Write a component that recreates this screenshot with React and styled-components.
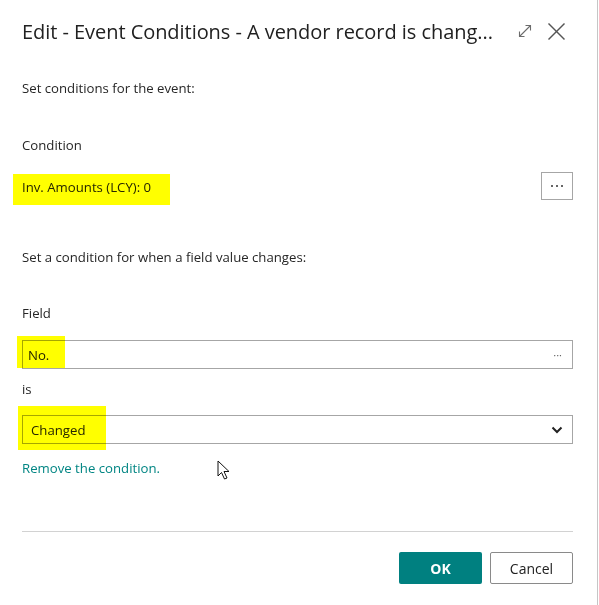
import React from 'react';
import styled, { createGlobalStyle } from 'styled-components';

const GlobalStyle = createGlobalStyle`
    body {
        margin: 0;
        background: #ffffff;
        font-family: "Open Sans", "Noto Sans", sans-serif;
        color: #212121;
    }
`;

const App = () => {
    return (
        <>
            <GlobalStyle />
            <Dialog>
                <Header>
                    <Title>Edit - Event Conditions - A vendor record is chang...</Title>
                    <HeaderIcons>
                        <IconButton aria-label="Expand">
                            <svg width="16" height="16" viewBox="0 0 16 16" fill="none" stroke="#6b6b6b" strokeWidth="1.1">
                                <path d="M2.5 13.5 L13.5 2.5" />
                                <path d="M8.5 2.5 H13.5 V7.5" />
                                <path d="M2.5 8.5 V13.5 H7.5" />
                            </svg>
                        </IconButton>
                        <IconButton aria-label="Close">
                            <svg width="19" height="19" viewBox="0 0 19 19" fill="none" stroke="#555" strokeWidth="1.5">
                                <path d="M1.5 1.5 L17.5 17.5" />
                                <path d="M17.5 1.5 L1.5 17.5" />
                            </svg>
                        </IconButton>
                    </HeaderIcons>
                </Header>

                <Body>
                    <Text $top={16}>Set conditions for the event:</Text>
                    <Text $top={37}>Condition</Text>
                    <ConditionRow>
                        <Marked>
                            Inv. Amounts (LCY): 0
                            <Highlight style={{ left: -9, top: -3, width: 157, height: 31 }} />
                        </Marked>
                        <DotsButton>
                            <Dots />
                        </DotsButton>
                    </ConditionRow>

                    <Text $top={47}>Set a condition for when a field value changes:</Text>
                    <Text $top={36}>Field</Text>
                    <Field $top={17}>
                        <FieldValue>No.</FieldValue>
                        <SmallDots>···</SmallDots>
                        <Highlight style={{ left: -6, top: -5, width: 48, height: 32 }} />
                    </Field>
                    <Text $top={10}>is</Text>
                    <Field $top={16}>
                        <FieldValue $pad={8}>Changed</FieldValue>
                        <svg width="12" height="8" viewBox="0 0 12 8" fill="none" stroke="#222" strokeWidth="2">
                            <path d="M1.5 1.5 L6 6 L10.5 1.5" />
                        </svg>
                        <Highlight style={{ left: -5, top: -10, width: 88, height: 44 }} />
                    </Field>
                    <LinkRow>
                        <RemoveLink>Remove the condition.</RemoveLink>
                        <Cursor>
                            <svg width="14" height="21" viewBox="0 0 14 21">
                                <path d="M1 1 L1 16 L4.5 12.5 L7.5 19 L10 18 L7 11.5 L12 11.5 Z" fill="#fff" stroke="#111" strokeWidth="1" strokeLinejoin="round" />
                            </svg>
                        </Cursor>
                    </LinkRow>
                </Body>

                <Footer>
                    <PrimaryButton>OK</PrimaryButton>
                    <SecondaryButton>Cancel</SecondaryButton>
                </Footer>
            </Dialog>
        </>
    );
};

export default App;

const Dialog = styled.div`
    width: 598px;
    height: 605px;
    border-right: 1px solid #c6c6c6;
    display: flex;
    flex-direction: column;
    box-sizing: border-box;
`;

const Header = styled.div`
    height: 62px;
    padding: 0 31px 0 22px;
    display: flex;
    align-items: center;
    justify-content: space-between;
`;

const Title = styled.h1`
    margin: 0;
    font-size: 20px;
    font-weight: 400;
    color: #212121;
    white-space: nowrap;
    letter-spacing: -0.05px;
`;

const HeaderIcons = styled.div`
    display: flex;
    align-items: center;
    gap: 14px;
`;

const IconButton = styled.div`
    display: flex;
    align-items: center;
    justify-content: center;
`;

const Body = styled.div`
    padding: 0 24px 0 22px;
    display: flex;
    flex-direction: column;
`;

const Text = styled.div`
    margin-top: ${p => p.$top}px;
    font-size: 13.2px;
    line-height: 20px;
    color: #262626;
`;

const ConditionRow = styled.div`
    margin-top: 17px;
    height: 28px;
    display: flex;
    align-items: center;
    justify-content: space-between;
`;

const Marked = styled.span`
    position: relative;
    font-size: 13.2px;
    line-height: 20px;
    color: #262626;
    margin-top: 1px;
`;

const Highlight = styled.span`
    position: absolute;
    background: #ffff00;
    mix-blend-mode: multiply;
    pointer-events: none;
`;

const DotsButton = styled.div`
    width: 30px;
    height: 26px;
    border: 1px solid #a6a6a6;
    display: flex;
    align-items: center;
    justify-content: center;
`;

const Dots = styled.span`
    width: 2px;
    height: 2px;
    border-radius: 50%;
    background: #333;
    box-shadow: -5px 0 0 #333, 5px 0 0 #333;
`;

const Field = styled.div`
    position: relative;
    margin-top: ${p => p.$top}px;
    height: 27px;
    border: 1px solid #a6a6a6;
    display: flex;
    align-items: center;
    justify-content: space-between;
    padding-right: 9px;
`;

const FieldValue = styled.span`
    padding-left: ${p => p.$pad || 5}px;
    font-size: 13.2px;
    color: #262626;
`;

const SmallDots = styled.span`
    font-size: 11px;
    color: #666;
    margin-right: 1px;
`;

const LinkRow = styled.div`
    position: relative;
    margin-top: 12px;
    height: 20px;
`;

const RemoveLink = styled.a`
    font-size: 13.2px;
    line-height: 20px;
    color: #008583;
    text-decoration: none;
`;

const Cursor = styled.span`
    position: absolute;
    left: 195px;
    top: 4px;
`;

const Footer = styled.div`
    margin: 55px 24px 0 22px;
    padding-top: 20px;
    border-top: 1px solid #d2d2d2;
    display: flex;
    justify-content: flex-end;
    gap: 8px;
`;

const PrimaryButton = styled.button`
    width: 83px;
    height: 32px;
    border: none;
    border-radius: 2px;
    background: #008080;
    color: #fff;
    font-family: "Open Sans", sans-serif;
    font-weight: 700;
    font-size: 14px;
`;

const SecondaryButton = styled.button`
    width: 83px;
    height: 32px;
    border: 1px solid #8a8a8a;
    border-radius: 2px;
    background: #fff;
    color: #212121;
    font-family: "Open Sans", sans-serif;
    font-size: 14px;
`;
